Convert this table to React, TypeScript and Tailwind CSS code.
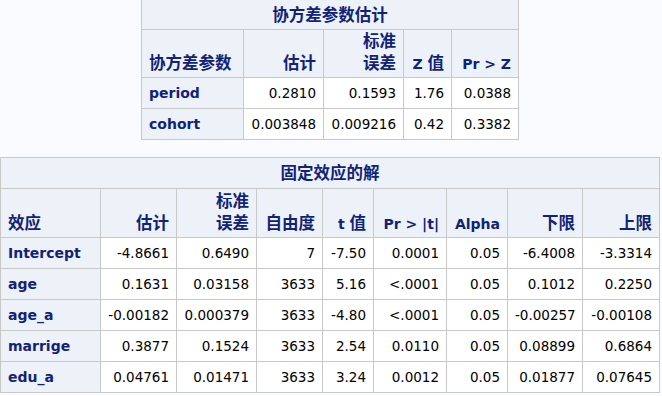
import React from "react";

type Cell = string;

const LATIN = '"DejaVu Sans", "Noto Sans CJK SC", sans-serif';

// wrap CJK runs so they get a bigger size than latin text
function Txt({ s }: { s: string }) {
  const parts = s.split(/([\u4e00-\u9fff]+)/);
  return (
    <>
      {parts.map((p, i) =>
        /[\u4e00-\u9fff]/.test(p) ? (
          <span key={i} className="text-[16.5px] font-bold" style={{ fontFamily: '"Noto Sans CJK SC", sans-serif' }}>
            {p}
          </span>
        ) : (
          <span key={i}>{p}</span>
        )
      )}
    </>
  );
}

function Head({ label }: { label: string }) {
  const lines = label.split("\n");
  return (
    <>
      {lines.map((l, i) => (
        <div key={i} className="leading-[20px]">
          <Txt s={l} />
        </div>
      ))}
    </>
  );
}

function SasTable({
  title,
  widths,
  heads,
  rows,
  titleH,
  headH,
}: {
  title: string;
  widths: number[];
  heads: string[];
  rows: Cell[][];
  titleH: number;
  headH: number;
}) {
  return (
    <table
      className="table-fixed border-collapse text-black"
      style={{ fontFamily: LATIN, width: widths.reduce((a, b) => a + b, 0) }}
    >
      <colgroup>
        {widths.map((w, i) => (
          <col key={i} style={{ width: w }} />
        ))}
      </colgroup>
      <thead>
        <tr style={{ height: titleH }}>
          <th
            colSpan={widths.length}
            className="border border-[#c8c8c8] bg-[#edf2f9] text-center align-middle leading-[20px] text-[#112277]"
          >
            <Txt s={title} />
          </th>
        </tr>
        <tr style={{ height: headH }}>
          {heads.map((h, i) => (
            <th
              key={i}
              className={`border border-[#c8c8c8] bg-[#edf2f9] px-[7px] pb-[3px] align-bottom text-[14px] font-bold text-[#112277] ${
                i === 0 ? "text-left" : "text-right"
              }`}
            >
              <Head label={h} />
            </th>
          ))}
        </tr>
      </thead>
      <tbody>
        {rows.map((r, ri) => (
          <tr key={ri} className="h-[31px]">
            {r.map((c, ci) =>
              ci === 0 ? (
                <th
                  key={ci}
                  className="border border-[#c8c8c8] bg-[#edf2f9] px-[7px] text-left text-[14px] font-bold text-[#112277]"
                >
                  {c}
                </th>
              ) : (
                <td key={ci} className="border border-[#c8c8c8] bg-white px-[7px] text-right text-[13.5px]">
                  {c}
                </td>
              )
            )}
          </tr>
        ))}
      </tbody>
    </table>
  );
}

const covRows: Cell[][] = [
  ["period", "0.2810", "0.1593", "1.76", "0.0388"],
  ["cohort", "0.003848", "0.009216", "0.42", "0.3382"],
];

const fixRows: Cell[][] = [
  ["Intercept", "-4.8661", "0.6490", "7", "-7.50", "0.0001", "0.05", "-6.4008", "-3.3314"],
  ["age", "0.1631", "0.03158", "3633", "5.16", "<.0001", "0.05", "0.1012", "0.2250"],
  ["age_a", "-0.00182", "0.000379", "3633", "-4.80", "<.0001", "0.05", "-0.00257", "-0.00108"],
  ["marrige", "0.3877", "0.1524", "3633", "2.54", "0.0110", "0.05", "0.08899", "0.6864"],
  ["edu_a", "0.04761", "0.01471", "3633", "3.24", "0.0012", "0.05", "0.01877", "0.07645"],
];

export default function App() {
  return (
    <div className="h-[396px] w-[662px] overflow-hidden bg-[#fafbfe]">
      <div className="-mt-px ml-[141px]">
        <SasTable
          title="协方差参数估计"
          widths={[102, 80, 80, 48, 67]}
          heads={["协方差参数", "估计", "标准\n误差", "Z 值", "Pr > Z"]}
          rows={covRows}
          titleH={30}
          headH={48}
        />
      </div>
      <div className="mt-[17px]">
        <SasTable
          title="固定效应的解"
          widths={[100, 76, 80, 66, 51, 73, 61, 75, 77]}
          heads={["效应", "估计", "标准\n误差", "自由度", "t 值", "Pr > |t|", "Alpha", "下限", "上限"]}
          rows={fixRows}
          titleH={31}
          headH={49}
        />
      </div>
    </div>
  );
}
